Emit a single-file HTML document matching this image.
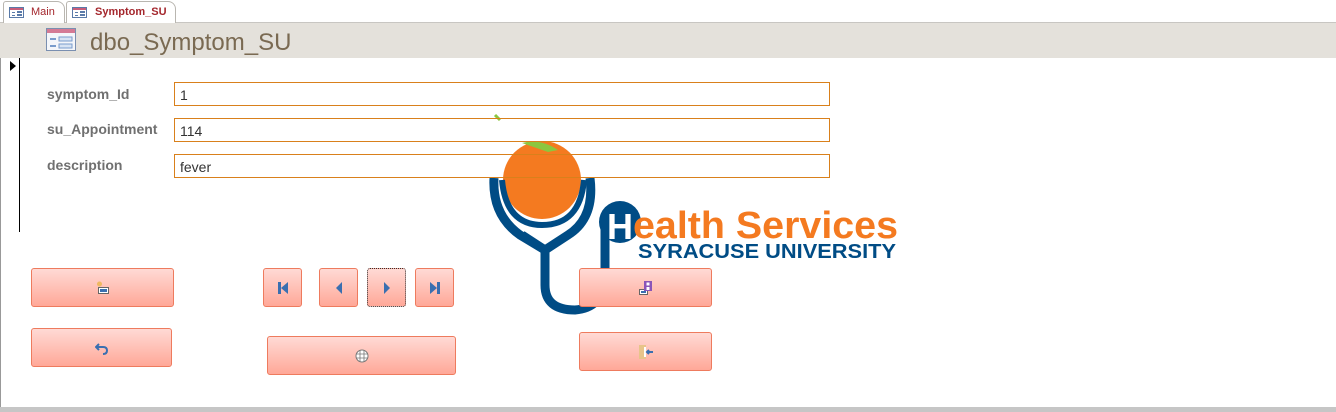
<!DOCTYPE html>
<html><head><style>
body{margin:0;width:1336px;height:412px;position:relative;overflow:hidden;background:#fff;font-family:"Liberation Sans",sans-serif}
.tabs{position:absolute;left:0;top:0;width:1336px;height:22px;background:#fff;border-bottom:1px solid #c8c6c2}
.tab{position:absolute;top:1px;height:21px;font-size:11px;color:#a4262c;line-height:20px;border:1px solid #b9b6b0;border-bottom:none;border-radius:3px 8px 0 0;background:#fff}
.hdr{position:absolute;left:0;top:23px;width:1336px;height:35px;background:#e4e1db}
.lbl{position:absolute;left:47px;font-size:14px;font-weight:bold;color:#707070}
.inp{position:absolute;left:174px;border:1px solid #d9801b;font-size:14px;color:#333;line-height:24px;padding-left:5px;box-sizing:border-box;width:656px;height:24px}
.btn{position:absolute;border:1px solid #ee7b5e;border-radius:3px;background:linear-gradient(#ffdad5,#ffa898);box-sizing:border-box;display:flex;align-items:center;justify-content:center}
</style></head><body>
<div class="tabs">
<div class="tab" style="left:3px;width:60px"><svg style="position:absolute;left:5px;top:5px" width="15" height="11"><rect x=".5" y=".5" width="14" height="10" fill="#fff" stroke="#5a7aa8"/><rect x="1" y="1" width="13" height="2" fill="#c85d7a"/><rect x="3" y="5" width="3" height="1" fill="#5a7aa8"/><rect x="8" y="4" width="5" height="2" fill="#5a7aa8"/><rect x="3" y="8" width="3" height="1" fill="#5a7aa8"/><rect x="8" y="7" width="5" height="2" fill="#5a7aa8"/></svg><span style="position:absolute;left:27px">Main</span></div>
<div class="tab" style="left:66px;width:108px;font-weight:bold;height:22px"><svg style="position:absolute;left:5px;top:5px" width="15" height="11"><rect x=".5" y=".5" width="14" height="10" fill="#fff" stroke="#5a7aa8"/><rect x="1" y="1" width="13" height="2" fill="#c85d7a"/><rect x="3" y="5" width="3" height="1" fill="#5a7aa8"/><rect x="8" y="4" width="5" height="2" fill="#5a7aa8"/><rect x="3" y="8" width="3" height="1" fill="#5a7aa8"/><rect x="8" y="7" width="5" height="2" fill="#5a7aa8"/></svg><span style="position:absolute;left:28px">Symptom_SU</span></div>
</div>
<div class="hdr">
<svg style="position:absolute;left:46px;top:5px" width="31" height="24"><rect x=".5" y=".5" width="29" height="22" fill="#f4f6fa" stroke="#7a8fb0"/><rect x="1" y="1" width="28" height="4" fill="#d47a95"/><rect x="4" y="10" width="6" height="2" fill="#7a9ccc"/><rect x="13" y="9" width="13" height="4" fill="#d7e3f3" stroke="#7a9ccc"/><rect x="4" y="17" width="6" height="2" fill="#7a9ccc"/><rect x="13" y="16" width="13" height="4" fill="#d7e3f3" stroke="#7a9ccc"/></svg>
<div style="position:absolute;left:90px;top:6px;font-size:24px;color:#7a6a52">dbo_Symptom_SU</div>
</div>
<div style="position:absolute;left:19px;top:58px;width:1px;height:174px;background:#000"></div>
<div style="position:absolute;left:0;top:58px;width:1px;height:354px;background:#999"></div>
<svg style="position:absolute;left:9px;top:61px" width="8" height="10"><path d="M1 0L7 5L1 10Z" fill="#000"/></svg>
<svg style="position:absolute;left:480px;top:100px" width="430" height="220">
<path d="M15 15 L20 20" stroke="#8cc63f" stroke-width="3"/>
<circle cx="62" cy="80" r="39" fill="#f47a20"/>
<path d="M42 43 Q60 38 78 50 L68 52Z" fill="#8cc63f"/>
<path d="M14 78 Q12 115 40 135 L65 150 L65 185 Q65 210 95 210 Q122 208 125 180 L125 130" fill="none" stroke="#004c85" stroke-width="9"/>
<path d="M110 78 Q115 118 88 135 L65 150 L42 135" fill="none" stroke="#004c85" stroke-width="9"/>
<path d="M22 80 Q26 125 62 125 Q100 125 104 80" fill="none" stroke="#004c85" stroke-width="6"/>
<circle cx="140" cy="122" r="21" fill="#004c85"/>
<text x="127" y="139" font-family="Liberation Sans" font-weight="bold" font-size="36" fill="#fff">H</text>
<text x="153" y="138" font-family="Liberation Sans" font-weight="bold" font-size="38" fill="#f47a20" textLength="265" lengthAdjust="spacingAndGlyphs">ealth Services</text>
<text x="158" y="158" font-family="Liberation Sans" font-weight="bold" font-size="20" fill="#004c85" textLength="258" lengthAdjust="spacingAndGlyphs">SYRACUSE UNIVERSITY</text>
</svg>
<div class="lbl" style="top:86px">symptom_Id</div>
<div class="lbl" style="top:121px">su_Appointment</div>
<div class="lbl" style="top:157px">description</div>
<div class="inp" style="top:82px">1</div>
<div class="inp" style="top:118px">114</div>
<div class="inp" style="top:154px">fever</div>
<div class="btn" style="left:31px;top:268px;width:143px;height:39px"><svg width="14" height="14"><circle cx="3.5" cy="3" r="2.5" fill="#f0b860"/><rect x="2.5" y="6.5" width="10" height="6" fill="#fff" stroke="#666"/><rect x="4" y="8" width="7" height="3" fill="#3a6fb0"/></svg></div>
<div class="btn" style="left:263px;top:268px;width:39px;height:39px"><svg width="14" height="14"><rect x="2" y="1" width="3" height="12" fill="#3a6fb0"/><path d="M12 1L5 7L12 13Z" fill="#3a6fb0"/></svg></div>
<div class="btn" style="left:319px;top:268px;width:39px;height:39px"><svg width="14" height="14"><path d="M10 1L4 7L10 13Z" fill="#3a6fb0"/></svg></div>
<div class="btn" style="left:367px;top:268px;width:39px;height:39px;border:1px dotted #333"><svg width="14" height="14"><path d="M4 1L10 7L4 13Z" fill="#3a6fb0"/></svg></div>
<div class="btn" style="left:415px;top:268px;width:39px;height:39px"><svg width="14" height="14"><path d="M2 1L9 7L2 13Z" fill="#3a6fb0"/><rect x="9" y="1" width="3" height="12" fill="#3a6fb0"/></svg></div>
<div class="btn" style="left:579px;top:268px;width:133px;height:39px"><svg width="16" height="16"><rect x="1.5" y="9.5" width="8" height="5" fill="#fff" stroke="#666"/><rect x="3" y="11" width="5" height="2" fill="#3a6fb0"/><rect x="6" y="1" width="8" height="10" fill="#8a55b8"/><rect x="8.5" y="2.5" width="3" height="3" fill="#fff"/><rect x="8.5" y="7" width="3" height="3" fill="#fff"/></svg></div>
<div class="btn" style="left:31px;top:328px;width:141px;height:39px"><svg width="14" height="14"><path d="M4 3L1 6L4 9M1 6H8Q12 6 12 9.5Q12 13 8 13" fill="none" stroke="#3a6fb0" stroke-width="2"/></svg></div>
<div class="btn" style="left:267px;top:336px;width:189px;height:39px"><svg width="14" height="14"><circle cx="7" cy="7" r="6" fill="#fff" stroke="#777"/><path d="M1 5H13M1 9H13M5 1V13M9 1V13" stroke="#777" stroke-width=".8"/></svg></div>
<div class="btn" style="left:579px;top:332px;width:133px;height:39px"><svg width="16" height="16"><path d="M1 1H8V15H1Z" fill="#e8c48a"/><rect x="6" y="3" width="2" height="10" fill="#fff"/><path d="M15 8H9M11 6L9 8L11 10" stroke="#3a6fb0" stroke-width="2" fill="none"/></svg></div>
<div style="position:absolute;left:0;top:407px;width:1336px;height:5px;background:#c6c6c6"></div>
</body></html>
